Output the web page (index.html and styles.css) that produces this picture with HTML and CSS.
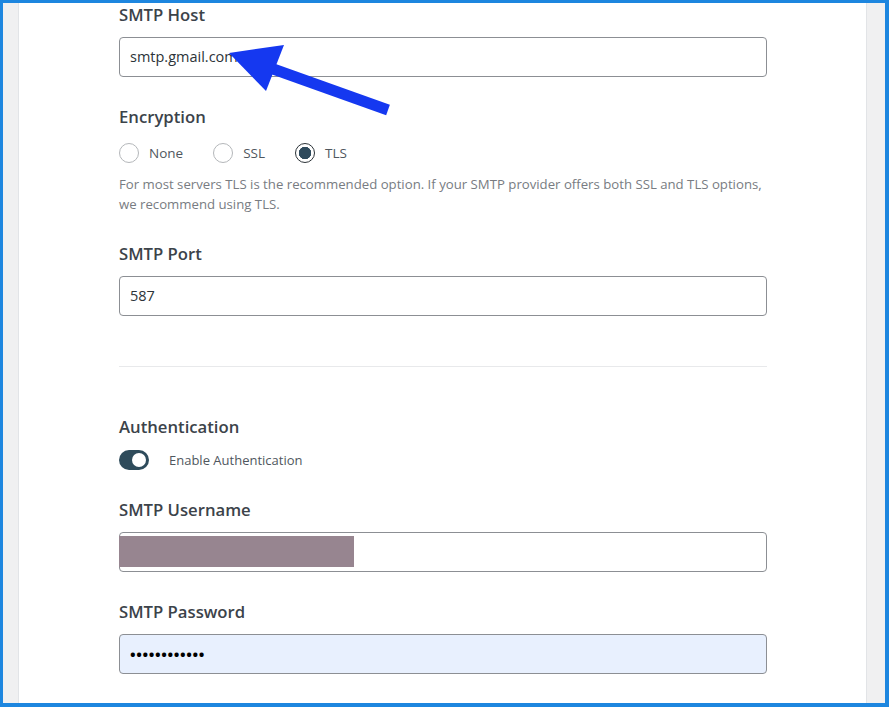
FILE: index.html
```html
<!DOCTYPE html>
<html>
  <head>
    <title>SMTP Settings</title>
    <meta name="viewport" content="width=device-width, initial-scale=1" />
    <link rel="stylesheet" href="styles.css">
  </head>

  <body>
    <div class="screen">
      <div class="panel">
        <div class="field">
          <div class="label">SMTP Host</div>
          <div class="input">smtp.gmail.com</div>
        </div>

        <div class="field">
          <div class="label">Encryption</div>
          <div class="radios">
            <span class="radio"><i class="dot"></i>None</span>
            <span class="radio"><i class="dot"></i>SSL</span>
            <span class="radio"><i class="dot checked"></i>TLS</span>
          </div>
          <p class="help">
            For most servers TLS is the recommended option. If your SMTP provider offers both SSL and TLS options,
            we recommend using TLS.
          </p>
        </div>

        <div class="field">
          <div class="label">SMTP Port</div>
          <div class="input">587</div>
        </div>

        <div class="divider"></div>

        <div class="field auth">
          <div class="label">Authentication</div>
          <div class="toggle-row">
            <span class="toggle"><i class="knob"></i></span>
            Enable Authentication
          </div>
        </div>

        <div class="field">
          <div class="label">SMTP Username</div>
          <div class="input masked"><span class="mask"></span></div>
        </div>

        <div class="field">
          <div class="label">SMTP Password</div>
          <div class="input autofill">••••••••••••</div>
        </div>
      </div>
    </div>

    <!-- annotation arrow pointing at the host field -->
    <svg class="arrow" width="889" height="707" viewBox="0 0 889 707">
      <line x1="262" y1="65" x2="388" y2="110" stroke="#1538f0" stroke-width="11" />
      <polygon points="229,53 284,45 266,91" fill="#1538f0" />
    </svg>
  </body>
</html>
```

FILE: styles.css
```css
*,
*:before,
*:after {
  box-sizing: border-box;
}

html,
body {
  margin: 0;
  height: 100%;
}

body {
  font-family: "Open Sans", "Liberation Sans", sans-serif;
  background: #1d86df;
  padding: 3px 4px 4px 3px;
  color: #3c434a;
  overflow: hidden;
  position: relative;
}

.screen {
  display: flex;
  height: 100%;
  background: #f0f0f1;
  padding: 0 18px 0 15px;
}

.panel {
  flex: 1;
  background: #fff;
  border-left: 1px solid #e2e4e7;
  border-right: 1px solid #e2e4e7;
  padding: 0 99px 0 100px;
  overflow: hidden;
}

.field {
  margin-bottom: 28px;
}

.label {
  font-size: 16.7px;
  font-weight: 600;
  line-height: 24px;
  margin-bottom: 10px;
  color: #3c434a;
}

.input {
  height: 40px;
  border: 1px solid #8c8f94;
  border-radius: 4px;
  padding: 0 10px;
  font-size: 14.5px;
  line-height: 38px;
  color: #2c3338;
}

.input.masked {
  padding: 3px 0;
}

.mask {
  display: block;
  width: 235px;
  height: 31px;
  margin-left: -1px;
  background: #978590;
}

.input.autofill {
  background: #e8f0fe;
  color: #000;
  font-size: 15px;
  font-weight: 700;
  letter-spacing: 0.6px;
}

.radios {
  display: flex;
  align-items: center;
  height: 28px;
  font-size: 13.5px;
  color: #50575e;
}

.radio {
  display: flex;
  align-items: center;
  margin-right: 30px;
}

.dot {
  width: 20px;
  height: 20px;
  border: 1px solid #b4b7ba;
  border-radius: 50%;
  margin-right: 10px;
}

.dot.checked {
  border-color: #2c3338;
  background: radial-gradient(circle, #2e4a5c 0 6px, #fff 6.5px);
}

.help {
  margin: 7px 0 0;
  font-size: 13.2px;
  line-height: 20px;
  color: #787c82;
}

.divider {
  border-top: 1px solid #e8e9eb;
  margin: 50px 0 48px;
}

.auth {
  margin-bottom: 27px;
}

.toggle-row {
  display: flex;
  align-items: center;
  height: 22px;
  font-size: 13px;
  color: #50575e;
}

.toggle {
  display: flex;
  align-items: center;
  justify-content: flex-end;
  width: 30px;
  height: 20px;
  border-radius: 10px;
  background: #2e4b5b;
  padding: 0 3px;
  margin-right: 20px;
}

.knob {
  width: 14px;
  height: 14px;
  border-radius: 50%;
  background: #fff;
}

.arrow {
  position: absolute;
  top: 0;
  left: 0;
  pointer-events: none;
}
```
